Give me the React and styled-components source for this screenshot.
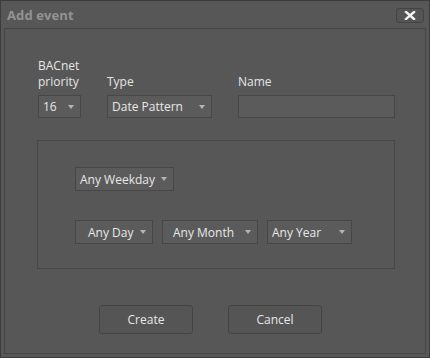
import React from 'react';
import styled, { createGlobalStyle } from 'styled-components';

const Global = createGlobalStyle`
  html, body {
    margin: 0;
    padding: 0;
    background: #575757;
  }
  * {
    box-sizing: border-box;
  }
`;

const Dialog = styled.div`
  width: 430px;
  height: 358px;
  display: flex;
  flex-direction: column;
  background: #575757;
  border: 1px solid #3c3c3c;
  font-family: 'Open Sans', 'Noto Sans', sans-serif;
  color: #e6e6e6;
`;

const TitleBar = styled.div`
  height: 27px;
  display: flex;
  align-items: center;
  justify-content: space-between;
  padding: 0 5px 0 6px;
`;

const Title = styled.div`
  font-size: 13px;
  font-weight: 700;
  color: #939393;
  letter-spacing: 0.1px;
`;

const CloseButton = styled.div`
  width: 28px;
  height: 15px;
  margin-top: 1px;
  border: 1px solid #444;
  border-radius: 3px;
  background: #545454;
  display: flex;
  align-items: center;
  justify-content: center;
`;

const Body = styled.div`
  flex: 1;
  margin: 0 3px 3px 3px;
  border: 1px solid #464646;
  padding: 29px 30px 0 33px;
`;

const FieldRow = styled.div`
  display: flex;
  align-items: flex-end;
  gap: 26px;
`;

const Field = styled.div`
  display: flex;
  flex-direction: column;
`;

const Label = styled.div`
  font-size: 12px;
  line-height: 16px;
  margin-bottom: 5px;
`;

const SelectBox = styled.div`
  width: ${(p) => p.$w}px;
  height: ${(p) => p.$h || 23}px;
  border: 1px solid #474747;
  background: #5b5b5b;
  display: flex;
  align-items: center;
  justify-content: space-between;
  padding: 0 6px 0 ${(p) => p.$pad || 4}px;
  font-size: 12px;
  color: #e8e8e8;
`;

const Caret = styled.span`
  width: 0;
  height: 0;
  border-left: 3.5px solid transparent;
  border-right: 3.5px solid transparent;
  border-top: 4px solid #b4b4b4;
`;

const TextInput = styled.div`
  width: 157px;
  height: 23px;
  border: 1px solid #474747;
  background: #5b5b5b;
`;

const Group = styled.div`
  margin-top: 22px;
  width: 358px;
  height: 129px;
  margin-left: -1px;
  border: 1px solid #474747;
  padding: 26px 0 0 37px;
  display: flex;
  flex-direction: column;
  gap: 29px;
`;

const GroupRow = styled.div`
  display: flex;
  gap: 9px;
`;

const Buttons = styled.div`
  display: flex;
  gap: 35px;
  margin-top: 36px;
  padding-left: 61px;
`;

const Button = styled.div`
  width: 94px;
  height: 29px;
  border: 1px solid #444;
  border-radius: 3px;
  background: #555;
  display: flex;
  align-items: center;
  justify-content: center;
  font-size: 12px;
  color: #e8e8e8;
`;

const Select = ({ value, w, h, pad }) => (
  <SelectBox $w={w} $h={h} $pad={pad}>
    <span>{value}</span>
    <Caret />
  </SelectBox>
);

export default function App() {
  return (
    <>
      <Global />
      <Dialog>
        <TitleBar>
          <Title>Add event</Title>
          <CloseButton>
            <svg width="12" height="9" viewBox="0 0 12 9">
              <path d="M2 1 L10 8 M10 1 L2 8" stroke="#f2f2f2" strokeWidth="2.4" strokeLinecap="square" />
            </svg>
          </CloseButton>
        </TitleBar>
        <Body>
          <FieldRow>
            <Field>
              <Label>
                BACnet
                <br />
                priority
              </Label>
              <Select value="16" w={43} />
            </Field>
            <Field>
              <Label>Type</Label>
              <Select value="Date Pattern" w={105} />
            </Field>
            <Field>
              <Label>Name</Label>
              <TextInput />
            </Field>
          </FieldRow>
          <Group>
            <GroupRow>
              <Select value="Any Weekday" w={99} h={24} pad={4} />
            </GroupRow>
            <GroupRow>
              <Select value="Any Day" w={78} h={24} pad={12} />
              <Select value="Any Month" w={96} h={24} pad={10} />
              <Select value="Any Year" w={85} h={24} pad={4} />
            </GroupRow>
          </Group>
          <Buttons>
            <Button>Create</Button>
            <Button>Cancel</Button>
          </Buttons>
        </Body>
      </Dialog>
    </>
  );
}
